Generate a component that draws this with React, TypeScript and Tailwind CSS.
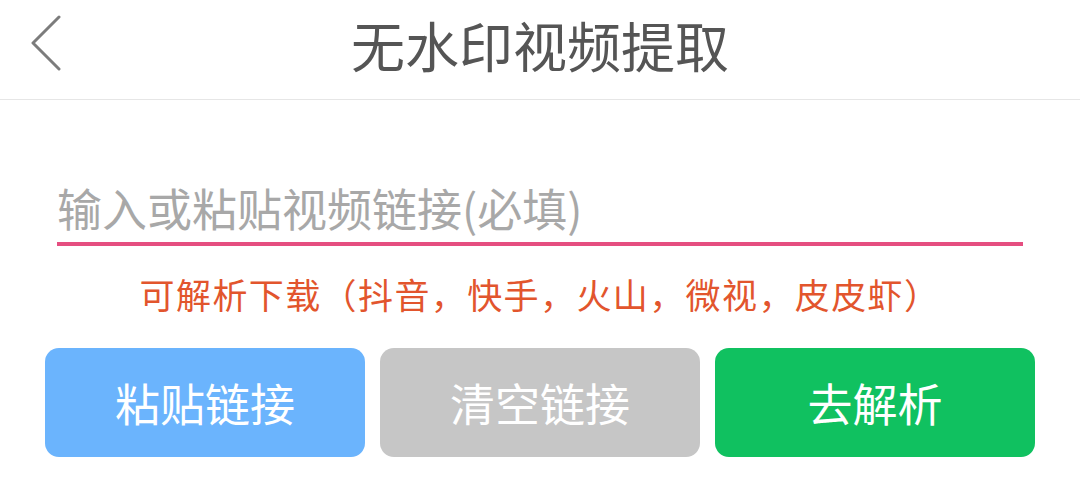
import { useState } from 'react';

const font = { fontFamily: '"Noto Sans CJK SC", "Noto Sans", sans-serif' };

export default function App() {
  const [link, setLink] = useState('');

  return (
    <div className="w-[1080px] h-[490px] bg-white" style={font}>
      {/* Top bar */}
      <div className="relative h-[100px] border-b border-[#e6e6e6] flex items-center justify-center">
        <button className="absolute left-[28px] top-[14px] w-[36px] h-[58px] flex items-center justify-center">
          <svg width="34" height="56" viewBox="0 0 34 56" fill="none">
            <path d="M30 2 L4 28 L30 54" stroke="#7c7c7c" strokeWidth="3" strokeLinecap="round" strokeLinejoin="round" />
          </svg>
        </button>
        <h1 className="text-[54px] leading-none text-[#555555] -mt-[10px]">无水印视频提取</h1>
      </div>

      {/* Link input */}
      <div className="px-[57px] pt-[78px]">
        <input
          value={link}
          onChange={(e) => setLink(e.target.value)}
          placeholder="输入或粘贴视频链接(必填)"
          className="w-full h-[68px] pb-[6px] border-b-4 border-[#e54e80] text-[45px] text-[#333] placeholder:text-[#a8a8a8] outline-none bg-transparent"
        />
      </div>

      <p className="mt-[23px] text-center text-[35px] tracking-[1.4px] leading-[50px] text-[#e2552d]">
        可解析下载（抖音，快手，火山，微视，皮皮虾）
      </p>

      {/* Actions */}
      <div className="mt-[29px] px-[45px] flex gap-[15px]">
        <button className="flex-1 h-[109px] rounded-[14px] bg-[#6bb4fd] text-white text-[45px]">粘贴链接</button>
        <button onClick={() => setLink('')} className="flex-1 h-[109px] rounded-[14px] bg-[#c6c6c6] text-white text-[45px]">清空链接</button>
        <button className="flex-1 h-[109px] rounded-[14px] bg-[#10c160] text-white text-[45px]">去解析</button>
      </div>
    </div>
  );
}
